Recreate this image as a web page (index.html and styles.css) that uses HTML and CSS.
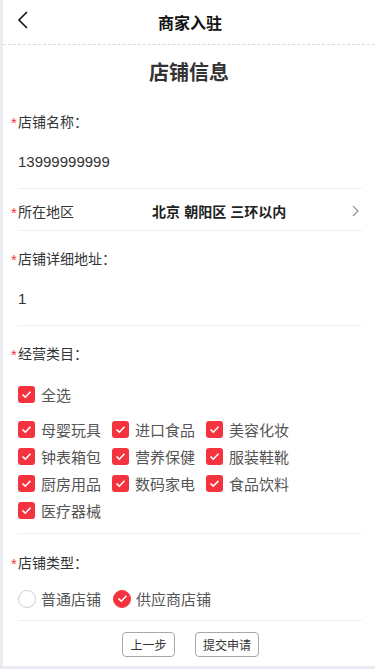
FILE: index.html
```html
<!DOCTYPE html>
<html lang="zh-CN">
<head>
<meta charset="utf-8">
<meta name="viewport" content="width=device-width, initial-scale=1">
<title>商家入驻</title>
<link rel="stylesheet" href="styles.css">
</head>
<body>
<div class="page">
  <header class="topbar">
    <span class="back">
      <svg width="11" height="18" viewBox="0 0 11 18"><path d="M10 1 L2 9 L10 17" fill="none" stroke="#111" stroke-width="1.6"/></svg>
    </span>
    <h1 class="topbar-title">商家入驻</h1>
  </header>

  <h2 class="section-title">店铺信息</h2>

  <div class="field">
    <div class="label"><span class="req">*</span>店铺名称：</div>
    <div class="value">13999999999</div>
  </div>

  <div class="field field-row">
    <div class="label label-fixed"><span class="req">*</span>所在地区</div>
    <div class="region">北京 朝阳区 三环以内</div>
    <svg class="arrow" width="7" height="12" viewBox="0 0 7 12"><path d="M1 1 L6 6 L1 11" fill="none" stroke="#999" stroke-width="1.3"/></svg>
  </div>

  <div class="field">
    <div class="label"><span class="req">*</span>店铺详细地址：</div>
    <div class="value">1</div>
  </div>

  <div class="field field-cats">
    <div class="label"><span class="req">*</span>经营类目：</div>
    <label class="check check-all"><span class="box"><svg width="11" height="9" viewBox="0 0 11 9"><path d="M1.5 4.5 L4.3 7.2 L9.5 1.8" fill="none" stroke="#fff" stroke-width="1.6"/></svg></span>全选</label>
    <div class="cat-grid">
      <label class="check"><span class="box"><svg width="11" height="9" viewBox="0 0 11 9"><path d="M1.5 4.5 L4.3 7.2 L9.5 1.8" fill="none" stroke="#fff" stroke-width="1.6"/></svg></span>母婴玩具</label>
      <label class="check"><span class="box"><svg width="11" height="9" viewBox="0 0 11 9"><path d="M1.5 4.5 L4.3 7.2 L9.5 1.8" fill="none" stroke="#fff" stroke-width="1.6"/></svg></span>进口食品</label>
      <label class="check"><span class="box"><svg width="11" height="9" viewBox="0 0 11 9"><path d="M1.5 4.5 L4.3 7.2 L9.5 1.8" fill="none" stroke="#fff" stroke-width="1.6"/></svg></span>美容化妆</label>
      <label class="check"><span class="box"><svg width="11" height="9" viewBox="0 0 11 9"><path d="M1.5 4.5 L4.3 7.2 L9.5 1.8" fill="none" stroke="#fff" stroke-width="1.6"/></svg></span>钟表箱包</label>
      <label class="check"><span class="box"><svg width="11" height="9" viewBox="0 0 11 9"><path d="M1.5 4.5 L4.3 7.2 L9.5 1.8" fill="none" stroke="#fff" stroke-width="1.6"/></svg></span>营养保健</label>
      <label class="check"><span class="box"><svg width="11" height="9" viewBox="0 0 11 9"><path d="M1.5 4.5 L4.3 7.2 L9.5 1.8" fill="none" stroke="#fff" stroke-width="1.6"/></svg></span>服装鞋靴</label>
      <label class="check"><span class="box"><svg width="11" height="9" viewBox="0 0 11 9"><path d="M1.5 4.5 L4.3 7.2 L9.5 1.8" fill="none" stroke="#fff" stroke-width="1.6"/></svg></span>厨房用品</label>
      <label class="check"><span class="box"><svg width="11" height="9" viewBox="0 0 11 9"><path d="M1.5 4.5 L4.3 7.2 L9.5 1.8" fill="none" stroke="#fff" stroke-width="1.6"/></svg></span>数码家电</label>
      <label class="check"><span class="box"><svg width="11" height="9" viewBox="0 0 11 9"><path d="M1.5 4.5 L4.3 7.2 L9.5 1.8" fill="none" stroke="#fff" stroke-width="1.6"/></svg></span>食品饮料</label>
      <label class="check"><span class="box"><svg width="11" height="9" viewBox="0 0 11 9"><path d="M1.5 4.5 L4.3 7.2 L9.5 1.8" fill="none" stroke="#fff" stroke-width="1.6"/></svg></span>医疗器械</label>
    </div>
  </div>

  <div class="field field-type">
    <div class="label"><span class="req">*</span>店铺类型：</div>
    <div class="radios">
      <label class="radio"><span class="dot"></span>普通店铺</label>
      <label class="radio"><span class="dot dot-on"><svg width="11" height="9" viewBox="0 0 11 9"><path d="M1.5 4.5 L4.3 7.2 L9.5 1.8" fill="none" stroke="#fff" stroke-width="1.6"/></svg></span>供应商店铺</label>
    </div>
  </div>

  <div class="actions">
    <button class="btn btn-prev">上一步</button>
    <button class="btn btn-submit">提交申请</button>
  </div>
</div>
</body>
</html>
```

FILE: styles.css
```css
* { box-sizing: border-box; }

html, body {
  margin: 0;
  padding: 0;
}

body {
  background: #e9ecf2;
  padding: 0 0 3px 3px;
  font-family: "Noto Sans CJK SC", sans-serif;
  color: #333;
}

.page {
  background: #fff;
  height: 666px;
  overflow: hidden;
}

.topbar {
  position: relative;
  height: 45px;
  border-bottom: 1px dashed #d8d8d8;
  display: flex;
  align-items: center;
  justify-content: center;
}

.back {
  position: absolute;
  left: 14px;
  top: 11px;
  display: flex;
}

.topbar-title {
  margin: 0;
  font-size: 16px;
  font-weight: bold;
  color: #111;
  line-height: 22px;
  padding-left: 2px;
}

.section-title {
  margin: 0;
  height: 49px;
  padding-top: 4px;
  display: flex;
  align-items: center;
  justify-content: center;
  font-size: 20px;
  font-weight: bold;
  color: #333;
  line-height: 26px;
}

.field {
  margin: 0 13px 0 15px;
  border-bottom: 1px solid #f0f0f0;
}

.label {
  font-size: 14px;
  line-height: 20px;
  height: 37px;
  padding-top: 17px;
  color: #333;
  white-space: nowrap;
}

.field-type .label {
  height: 38px;
  padding-top: 18px;
}

.req {
  display: inline-block;
  width: 7px;
  height: 20px;
  margin-left: -7px;
  padding-top: 3px;
  color: #f5333f;
  font-family: "Liberation Sans", sans-serif;
  font-size: 15px;
  line-height: 17px;
  vertical-align: top;
}

.value {
  font-family: "Liberation Sans", "Noto Sans CJK SC", sans-serif;
  font-size: 15px;
  line-height: 21px;
  height: 57px;
  padding: 20px 0 16px;
  color: #333;
}

.field-row {
  display: flex;
  align-items: center;
  height: 42px;
  padding-top: 3px;
}

.field-row .label {
  padding-top: 0;
  height: 21px;
  line-height: 21px;
}

.label-fixed {
  width: 134px;
  flex: none;
}

.region {
  flex: 1;
  font-size: 14px;
  font-weight: bold;
  line-height: 21px;
  color: #222;
  word-spacing: 1px;
}

.arrow {
  margin-right: 3px;
}

.check {
  display: flex;
  align-items: center;
  height: 21px;
  font-size: 15px;
  line-height: 21px;
  color: #555;
}

.box {
  width: 17px;
  height: 17px;
  border-radius: 3px;
  background: #f5333f;
  display: flex;
  align-items: center;
  justify-content: center;
  margin-right: 6px;
  flex: none;
}

.check-all {
  margin-top: 21px;
}

.cat-grid {
  display: grid;
  grid-template-columns: repeat(3, 94px);
  grid-auto-rows: 21px;
  row-gap: 6px;
  margin-top: 14px;
  padding-bottom: 12px;
}

.radios {
  display: flex;
  gap: 12px;
  height: 21px;
  margin-top: 16px;
  margin-bottom: 11px;
}

.radio {
  display: flex;
  align-items: center;
  font-size: 15px;
  line-height: 21px;
  color: #555;
}

.dot {
  width: 18px;
  height: 18px;
  border-radius: 50%;
  border: 1px solid #cfcfcf;
  margin-right: 5px;
  display: flex;
  align-items: center;
  justify-content: center;
}

.dot-on {
  background: #f5333f;
  border-color: #f5333f;
}

.actions {
  display: flex;
  justify-content: center;
  gap: 20px;
  margin-top: 11px;
  padding-left: 3px;
}

.btn {
  height: 25px;
  padding: 0;
  background: #fff;
  border: 1px solid #a8a8a8;
  border-radius: 4px;
  font-family: "Noto Sans CJK SC", sans-serif;
  font-size: 12px;
  color: #333;
  line-height: 23px;
}

.btn-prev { width: 53px; }
.btn-submit { width: 64px; }
```
